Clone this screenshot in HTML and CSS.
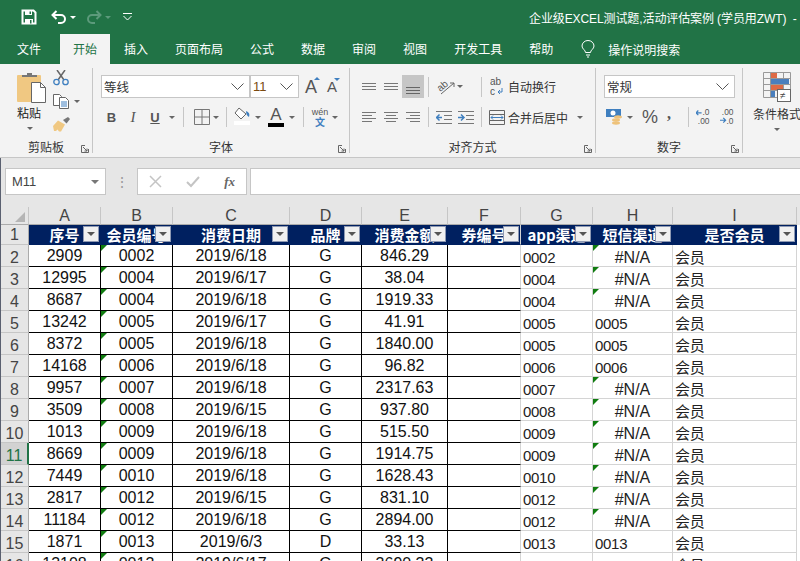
FILE: index.html
```html
<!DOCTYPE html>
<html lang="zh">
<head>
<meta charset="utf-8">
<title>企业级EXCEL测试题</title>
<link rel="stylesheet" href="styles.css">
</head>
<body>
<header class="titlebar">
  <div class="qat">
    <svg class="save" width="16" height="16" viewBox="0 0 16 16"><path d="M1.500 1.500h11l2 2v11h-13z" fill="none" stroke="#fff" stroke-width="2"/><path d="M4 1.500h7v4.500H4zM4 10h8v5H4z" fill="#fff"/><path d="M8.500 2.500h1.500v2.500H8.500zM9 11h1.500v3.500H9z" fill="#217346"/></svg>
    <svg class="undo" width="16" height="14" viewBox="0 0 16 14"><path d="M5.500 1 1.500 5l4 4M2 5h8a4 4 0 0 1 0 8H7" fill="none" stroke="#fff" stroke-width="2"/></svg>
    <span class="qcaret"></span>
    <svg class="redo" width="16" height="14" viewBox="0 0 16 14"><path d="M10.500 1l4 4-4 4M14 5H6a4 4 0 0 0 0 8h3" fill="none" stroke="#5c9a7b" stroke-width="2"/></svg>
    <span class="qcaret dim"></span>
    <svg class="custom" width="9" height="8" viewBox="0 0 9 8"><path d="M0 .5h9" stroke="#fff"/><path d="M.5 3l4 4 4-4" fill="none" stroke="#fff"/></svg>
  </div>
  <div class="doc">企业级EXCEL测试题,活动评估案例 (学员用ZWT)&nbsp; -</div>
</header>
<nav class="tabs">
  <span class="tab first">文件</span>
  <span class="tab active">开始</span>
  <span class="tab">插入</span>
  <span class="tab">页面布局</span>
  <span class="tab">公式</span>
  <span class="tab">数据</span>
  <span class="tab">审阅</span>
  <span class="tab">视图</span>
  <span class="tab">开发工具</span>
  <span class="tab">帮助</span>
  <svg class="bulb" width="14" height="18" viewBox="0 0 14 18"><path d="M4.500 12.500C4.500 10 1 9 1 6a6 5.500 0 0 1 12 0c0 3-3.500 4-3.500 6.500zM5 15h4M6 17h2" fill="none" stroke="#fff"/></svg>
  <span class="search">操作说明搜索</span>
</nav>

<section class="ribbon">
  <div class="group g-clip">
    <div class="paste">
      <svg width="29" height="31" viewBox="0 0 29 31"><rect x="0" y="3" width="24" height="27" rx="1" fill="#f0c882"/><path d="M5 5V3h5V1h5v2h5v2z" fill="#777"/><path d="M14.500 10.500h9l5 5v15h-14z" fill="#fff" stroke="#666"/><path d="M23.500 10.500v5h5" fill="none" stroke="#666"/></svg>
      <span class="paste-label">粘贴</span>
      <span class="caret"></span>
    </div>
    <div class="clip-tools">
      <svg width="16" height="16" viewBox="0 0 16 16"><path d="M4 0l7 10M12 0 5 10" stroke="#666" stroke-width="1.500"/><circle cx="3.500" cy="12" r="2.700" fill="none" stroke="#3f7fbf" stroke-width="1.300"/><circle cx="12.500" cy="12" r="2.700" fill="none" stroke="#3f7fbf" stroke-width="1.300"/></svg>
      <div class="copy-row">
        <svg width="16" height="15" viewBox="0 0 16 15"><path d="M.5.500h6l2 2v9h-8z" fill="#fff" stroke="#666"/><path d="M6.500 3.500h6l3 3v8h-9z" fill="#fff" stroke="#666"/><path d="M8 8h6M8 10h6M8 12h6" stroke="#3f7fbf"/></svg>
        <span class="caret"></span>
      </div>
      <svg width="17" height="15" viewBox="0 0 17 15"><path d="M10 3l3.500 3.500L17 2 15 0z" fill="#777"/><path d="M5 3.500l7 4-4 7H6l-1.500-2L3 14H1L0 9z" fill="#f0c882"/></svg>
    </div>
    <div class="label label-clip">剪贴板</div>
    <svg class="launch" width="8" height="8" viewBox="0 0 8 8"><path d="M7.500 4v3.500H.5v-7H4M2 2l4 4M6 3.500V6H3.500" fill="none" stroke="#666"/></svg>
  </div>

  <div class="group g-font">
    <div class="row row1">
      <div class="select w149"><span class="sel-text">等线</span><svg class="chev" width="13" height="7" viewBox="0 0 13 7"><path d="M.5.500l6 6 6-6" fill="none" stroke="#555"/></svg></div>
      <div class="select w49 size"><span class="size-num">11</span><svg class="chev" width="13" height="7" viewBox="0 0 13 7"><path d="M.5.500l6 6 6-6" fill="none" stroke="#555"/></svg></div>
      <span class="bigA first-a">A<i class="tri-up"></i></span>
      <span class="bigA small-a">A<i class="tri-down"></i></span>
    </div>
    <div class="row row2">
      <span class="tool w21 bold">B</span>
      <span class="tool w22 ital">I</span>
      <span class="tool w22 und">U</span>
      <span class="tool w12"><span class="caret"></span></span>
      <span class="vsep ml5"></span>
      <span class="tool w20 ml8"><svg width="16" height="16" viewBox="0 0 16 16"><path d="M.5.500h15v15H.5zM8 .5v15M.5 8h15" fill="none" stroke="#777"/></svg></span>
      <span class="tool w7"><span class="caret"></span></span>
      <span class="vsep ml7"></span>
      <span class="tool w16 ml7 stack"><svg width="16" height="13" viewBox="0 0 16 13"><path d="M5 1l7 6-5 5-6-6z" fill="#fff" stroke="#666"/><path d="M12 4c3 1 4 3 3 6-2-1-3-3-3-6z" fill="#3f7fbf"/></svg><i class="bar white"></i></span>
      <span class="tool w16"><span class="caret"></span></span>
      <span class="tool w16 ml2 stack colorA">A<i class="bar black"></i></span>
      <span class="tool w16"><span class="caret"></span></span>
      <span class="vsep ml3"></span>
      <span class="tool w16 ml8 phon"><span class="wen">wén</span><span class="wenzi">文</span></span>
      <span class="tool w14"><span class="caret"></span></span>
    </div>
    <div class="label label-font">字体</div>
    <svg class="launch" width="8" height="8" viewBox="0 0 8 8"><path d="M7.500 4v3.500H.5v-7H4M2 2l4 4M6 3.500V6H3.500" fill="none" stroke="#666"/></svg>
  </div>

  <div class="group g-align">
    <div class="row row1">
      <span class="tool w22"><svg class="lines" width="15" height="8" viewBox="0 0 15 8"><path d="M0 .5h14M0 3.500h14M0 6.500h14" stroke="#777"/></svg></span>
      <span class="tool w22"><svg class="lines" width="15" height="8" viewBox="0 0 15 8"><path d="M0 .5h14M0 3.500h14M0 6.500h14" stroke="#777"/></svg></span>
      <span class="tool w22 on"><svg class="lines low" width="15" height="8" viewBox="0 0 15 8"><path d="M0 .5h14M0 3.500h14M0 6.500h14" stroke="#666"/></svg></span>
      <span class="vsep ml4"></span>
      <span class="tool w20 ml7"><svg width="19" height="16" viewBox="0 0 19 16"><text class="svg-ab" x="1" y="11" transform="rotate(-40 5 9)">ab</text><path d="M4 15 17 4M13 4h4v4" fill="none" stroke="#666"/></svg></span>
      <span class="tool w7"><span class="caret"></span></span>
      <span class="vsep ml18"></span>
      <span class="tool w14 ml8"><svg width="14" height="19" viewBox="0 0 14 19"><text class="svg-ab" x="0" y="8">ab</text><text class="svg-ab" x="0" y="18">c</text><path d="M12 11v4H8M10 13l-2 2 2 2" fill="none" stroke="#3f7fbf"/></svg></span>
      <span class="text-tool ml4">自动换行</span>
    </div>
    <div class="row row2">
      <span class="tool w22"><svg width="15" height="11" viewBox="0 0 15 11"><path d="M0 .5h14M0 3.500h10M0 6.500h14M0 9.500h10" stroke="#777"/></svg></span>
      <span class="tool w22"><svg width="15" height="11" viewBox="0 0 15 11"><path d="M0 .5h14M2 3.500h10M0 6.500h14M2 9.500h10" stroke="#777"/></svg></span>
      <span class="tool w22"><svg width="15" height="11" viewBox="0 0 15 11"><path d="M0 .5h14M4 3.500h10M0 6.500h14M4 9.500h10" stroke="#777"/></svg></span>
      <span class="vsep ml4"></span>
      <span class="tool w16 ml7"><svg width="16" height="13" viewBox="0 0 16 13"><path d="M0 .5h16M8 4.500h8M8 8.500h8M0 12.500h16" stroke="#777"/><path d="M0 6.500h6M3.500 3.500l-3 3 3 3" fill="none" stroke="#3f7fbf" stroke-width="1.500"/></svg></span>
      <span class="tool w16 ml6"><svg width="16" height="13" viewBox="0 0 16 13"><path d="M0 .5h16M8 4.500h8M8 8.500h8M0 12.500h16" stroke="#777"/><path d="M0 6.500h6M3 3.500l3 3-3 3" fill="none" stroke="#3f7fbf" stroke-width="1.500"/></svg></span>
      <span class="vsep ml7"></span>
      <span class="tool w16 ml7"><svg width="16" height="15" viewBox="0 0 16 15"><path d="M.5.500h15v14H.5zM.5 4.500h15M.5 10.500h15" fill="none" stroke="#666"/><path d="M2 7.500h12M4 5.500l-2 2 2 2M12 5.500l2 2-2 2" fill="none" stroke="#3f7fbf"/></svg></span>
      <span class="text-tool ml3">合并后居中</span>
      <span class="tool w24"><span class="caret"></span></span>
    </div>
    <div class="label label-align">对齐方式</div>
    <svg class="launch" width="8" height="8" viewBox="0 0 8 8"><path d="M7.500 4v3.500H.5v-7H4M2 2l4 4M6 3.500V6H3.500" fill="none" stroke="#666"/></svg>
  </div>

  <div class="group g-num">
    <div class="row row1">
      <div class="select w131"><span class="sel-text">常规</span><svg class="chev" width="13" height="7" viewBox="0 0 13 7"><path d="M.5.500l6 6 6-6" fill="none" stroke="#555"/></svg></div>
    </div>
    <div class="row row2">
      <span class="tool w18 ml2"><svg width="18" height="16" viewBox="0 0 18 16"><rect x="0" y="0" width="15" height="8" fill="#3f7fbf"/><circle cx="7" cy="4" r="2.500" fill="#fff"/><ellipse cx="12" cy="8" rx="4" ry="1.700" fill="#eec27a"/><ellipse cx="10" cy="11" rx="4" ry="1.700" fill="#eec27a"/><ellipse cx="10" cy="14" rx="4" ry="1.700" fill="#eec27a"/></svg></span>
      <span class="tool w12"><span class="caret"></span></span>
      <span class="tool w14 ml7 pct">%</span>
      <span class="tool w14 ml5 comma">,</span>
      <span class="vsep ml12"></span>
      <span class="tool w14 ml7"><svg width="15" height="16" viewBox="0 0 15 16"><text class="svg-dec" x="7" y="6">.0</text><text class="svg-dec" x="2" y="15">.00</text><path d="M0 3.500h6M2.500 1 0 3.500 2.500 6" fill="none" stroke="#3f7fbf" stroke-width="1.300"/></svg></span>
      <span class="tool w14 ml10"><svg width="15" height="16" viewBox="0 0 15 16"><text class="svg-dec" x="2" y="6">.00</text><text class="svg-dec" x="7" y="15">.0</text><path d="M0 11.500h6M3.500 9 6 11.500 3.500 14" fill="none" stroke="#3f7fbf" stroke-width="1.300"/></svg></span>
    </div>
    <div class="label label-num">数字</div>
    <svg class="launch" width="8" height="8" viewBox="0 0 8 8"><path d="M7.500 4v3.500H.5v-7H4M2 2l4 4M6 3.500V6H3.500" fill="none" stroke="#666"/></svg>
  </div>

  <div class="group g-style">
    <svg class="cf" width="28" height="31" viewBox="0 0 28 31"><path d="M.5.500h27v25H.5zM.5 6.500h27M.5 12.500h27M.5 18.500h27M7.500.5v25M20.500.5v25" fill="none" stroke="#999"/><rect x="8" y="1" width="6" height="5" fill="#de6a45"/><rect x="8" y="7" width="18" height="5" fill="#4a7fbd"/><rect x="8" y="13" width="12" height="5" fill="#de6a45"/><rect x="8" y="19" width="4" height="6" fill="#4a7fbd"/><rect x="14.500" y="17.500" width="13" height="12" fill="#fff" stroke="#666"/><text class="svg-ne" x="17" y="27">≠</text></svg>
    <span class="style-label">条件格式</span>
    <span class="caret"></span>
  </div>
</section>

<section class="formula">
  <div class="namebox"><span>M11</span><span class="caret dark"></span></div>
  <div class="dots">⋮</div>
  <div class="fxbox">
    <svg width="13" height="13" viewBox="0 0 13 13"><path d="M1 1l11 11M12 1 1 12" stroke="#c4c4c4" stroke-width="1.500"/></svg>
    <svg width="14" height="12" viewBox="0 0 14 12"><path d="M1 6l4 4 8-9" fill="none" stroke="#c4c4c4" stroke-width="2"/></svg>
    <span class="fx">fx</span>
  </div>
  <div class="input"></div>
</section>

<table class="sheet">
  <colgroup>
    <col class="c-rh"><col class="c-a"><col class="c-b"><col class="c-c"><col class="c-d"><col class="c-e"><col class="c-f"><col class="c-g"><col class="c-h"><col class="c-i"><col class="c-j">
  </colgroup>
  <thead>
    <tr class="cols">
      <th class="corner"><i></i></th><th>A</th><th>B</th><th>C</th><th>D</th><th>E</th><th>F</th><th>G</th><th>H</th><th>I</th><th class="blank"></th>
    </tr>
  </thead>
  <tbody>
    <tr class="head">
      <th class="rh">1</th>
      <td><div class="clipcell">序号</div><i class="fb"></i></td>
      <td><div class="clipcell">会员编号</div><i class="fb"></i></td>
      <td><div class="clipcell">消费日期</div><i class="fb"></i></td>
      <td><div class="clipcell">品牌</div><i class="fb"></i></td>
      <td><div class="clipcell">消费金额</div><i class="fb"></i></td>
      <td><div class="clipcell">券编号</div><i class="fb"></i></td>
      <td><div class="clipcell">app渠道</div><i class="fb"></i></td>
      <td><div class="clipcell">短信渠道</div><i class="fb"></i></td>
      <td><div class="clipcell">是否会员</div><i class="fb"></i></td>
      <td class="blank"></td>
    </tr>
    <tr><th class="rh">2</th><td>2909</td><td class="t">0002</td><td>2019/6/18</td><td>G</td><td>846.29</td><td></td><td class="l">0002</td><td class="l c t">#N/A</td><td class="l">会员</td><td class="blank"></td></tr>
    <tr><th class="rh">3</th><td>12995</td><td class="t">0004</td><td>2019/6/17</td><td>G</td><td>38.04</td><td></td><td class="l">0004</td><td class="l c t">#N/A</td><td class="l">会员</td><td class="blank"></td></tr>
    <tr><th class="rh">4</th><td>8687</td><td class="t">0004</td><td>2019/6/18</td><td>G</td><td>1919.33</td><td></td><td class="l">0004</td><td class="l c t">#N/A</td><td class="l">会员</td><td class="blank"></td></tr>
    <tr><th class="rh">5</th><td>13242</td><td class="t">0005</td><td>2019/6/17</td><td>G</td><td>41.91</td><td></td><td class="l">0005</td><td class="l">0005</td><td class="l">会员</td><td class="blank"></td></tr>
    <tr><th class="rh">6</th><td>8372</td><td class="t">0005</td><td>2019/6/18</td><td>G</td><td>1840.00</td><td></td><td class="l">0005</td><td class="l">0005</td><td class="l">会员</td><td class="blank"></td></tr>
    <tr><th class="rh">7</th><td>14168</td><td class="t">0006</td><td>2019/6/18</td><td>G</td><td>96.82</td><td></td><td class="l">0006</td><td class="l">0006</td><td class="l">会员</td><td class="blank"></td></tr>
    <tr><th class="rh">8</th><td>9957</td><td class="t">0007</td><td>2019/6/18</td><td>G</td><td>2317.63</td><td></td><td class="l">0007</td><td class="l c t">#N/A</td><td class="l">会员</td><td class="blank"></td></tr>
    <tr><th class="rh">9</th><td>3509</td><td class="t">0008</td><td>2019/6/15</td><td>G</td><td>937.80</td><td></td><td class="l">0008</td><td class="l c t">#N/A</td><td class="l">会员</td><td class="blank"></td></tr>
    <tr><th class="rh">10</th><td>1013</td><td class="t">0009</td><td>2019/6/18</td><td>G</td><td>515.50</td><td></td><td class="l">0009</td><td class="l c t">#N/A</td><td class="l">会员</td><td class="blank"></td></tr>
    <tr><th class="rh sel">11</th><td>8669</td><td class="t">0009</td><td>2019/6/18</td><td>G</td><td>1914.75</td><td></td><td class="l">0009</td><td class="l c t">#N/A</td><td class="l">会员</td><td class="blank"></td></tr>
    <tr><th class="rh">12</th><td>7449</td><td class="t">0010</td><td>2019/6/18</td><td>G</td><td>1628.43</td><td></td><td class="l">0010</td><td class="l c t">#N/A</td><td class="l">会员</td><td class="blank"></td></tr>
    <tr><th class="rh">13</th><td>2817</td><td class="t">0012</td><td>2019/6/15</td><td>G</td><td>831.10</td><td></td><td class="l">0012</td><td class="l c t">#N/A</td><td class="l">会员</td><td class="blank"></td></tr>
    <tr><th class="rh">14</th><td>11184</td><td class="t">0012</td><td>2019/6/18</td><td>G</td><td>2894.00</td><td></td><td class="l">0012</td><td class="l c t">#N/A</td><td class="l">会员</td><td class="blank"></td></tr>
    <tr><th class="rh">15</th><td>1871</td><td class="t">0013</td><td>2019/6/3</td><td>D</td><td>33.13</td><td></td><td class="l">0013</td><td class="l">0013</td><td class="l">会员</td><td class="blank"></td></tr>
    <tr><th class="rh">16</th><td>13108</td><td class="t">0013</td><td>2019/6/17</td><td>G</td><td>3690.33</td><td></td><td class="l">0013</td><td class="l">0013</td><td class="l">会员</td><td class="blank"></td></tr>
  </tbody>
</table>
</body>
</html>
```

FILE: styles.css
```css
* { box-sizing: border-box; }
html, body { margin: 0; padding: 0; height: 561px; overflow: hidden; }
body { width: 800px; background: #e6e6e6; font-family: "Noto Sans CJK SC", "Liberation Sans", sans-serif; color: #333; font-size: 12px; }
i { font-style: normal; display: block; }

/* title */
.titlebar { height: 34px; background: #217346; display: flex; align-items: center; justify-content: space-between; color: #fff; }
.qat { display: flex; align-items: center; padding-left: 21px; }
.undo { margin-left: 14px; }
.qcaret { width: 0; height: 0; margin-left: 3px; border: 3px solid transparent; border-top: 3px solid #fff; border-bottom: 0; }
.qcaret.dim { border-top-color: #5c9a7b; }
.redo { margin-left: 10px; }
.custom { margin-left: 12px; }
.doc { font-family: "Liberation Sans", "Noto Sans CJK SC", sans-serif; font-size: 12px; letter-spacing: -0.1px; white-space: nowrap; width: 271px; overflow: hidden; }

.tabs { height: 30px; background: #217346; display: flex; align-items: center; gap: 1px; color: #fff; }
.tab { height: 30px; line-height: 30px; padding: 0 13px; font-size: 12px; }
.tab.first { margin-left: 4px; margin-right: 5px; }
.tab.active { background: #f3f3f3; color: #217346; }
.bulb { margin-left: 14px; }
.search { margin-left: 12px; }

/* ribbon */
.ribbon { height: 94px; background: #f3f3f3; border-bottom: 1px solid #c6c6c6; display: flex; align-items: flex-start; padding-top: 4px; }
.group { position: relative; height: 85px; border-right: 1px solid #c6c6c6; flex: none; }
.g-clip { width: 93px; display: flex; }
.g-font { width: 257px; padding-left: 8px; }
.g-align { width: 246px; padding-left: 8px; }
.g-num { width: 147px; padding-left: 8px; }
.g-style { flex: 1; border-right: 0; display: flex; flex-direction: column; align-items: flex-start; padding: 4px 0 0 10px; overflow: hidden; }
.cf { margin-left: 10px; }

.row { display: flex; align-items: center; }
.row1 { height: 23px; margin-top: 7px; }
.row2 { height: 20px; margin-top: 9px; }
.label { position: absolute; bottom: -2px; left: 0; right: 0; text-align: center; font-size: 12px; line-height: 16px; }
.launch { position: absolute; right: 3px; bottom: 0; }

.paste { width: 49px; margin-left: 17px; padding-top: 4px; display: flex; flex-direction: column; align-items: flex-start; }
.paste-label { line-height: 16px; margin-top: 2px; font-size: 12px; color: #222; }
.paste .caret { margin: 6px 0 0 10px; }
.clip-tools { display: flex; flex-direction: column; gap: 8px; margin-left: -13px; padding-top: 2px; }
.copy-row { display: flex; align-items: center; gap: 5px; }

.select { height: 23px; background: #fff; border: 1px solid #c6c6c6; display: flex; align-items: center; justify-content: space-between; padding: 0 5px 0 2px; color: #333; font-size: 12px; }
.sel-text { font-size: 12.5px; }
.w149 { width: 149px; }
.w49 { width: 49px; }
.w131 { width: 131px; }
.size-num { font-family: "Liberation Sans", sans-serif; font-size: 13px; color: #7a4a10; }
.bigA { position: relative; color: #555; font-family: "Liberation Sans", sans-serif; line-height: 1; }
.first-a { font-size: 18px; margin-left: 6px; }
.small-a { font-size: 15px; margin-left: 10px; }
.tri-up, .tri-down { position: absolute; left: 100%; width: 0; height: 0; border: 3px solid transparent; margin-left: -3px; }
.tri-up { top: -1px; border-top: 0; border-bottom: 3px solid #3f7fbf; }
.tri-down { top: -1px; border-bottom: 0; border-top: 3px solid #3f7fbf; }

.tool { display: flex; align-items: center; justify-content: center; flex: none; height: 20px; color: #555; }
.w7 { width: 7px; } .w12 { width: 12px; } .w14 { width: 14px; } .w16 { width: 16px; } .w18 { width: 18px; }
.w20 { width: 20px; } .w21 { width: 21px; } .w22 { width: 22px; } .w24 { width: 24px; }
.ml2 { margin-left: 2px; } .ml3 { margin-left: 3px; } .ml4 { margin-left: 4px; } .ml5 { margin-left: 5px; } .ml6 { margin-left: 6px; }
.ml7 { margin-left: 7px; } .ml8 { margin-left: 8px; } .ml10 { margin-left: 10px; } .ml12 { margin-left: 12px; } .ml18 { margin-left: 18px; }
.vsep { width: 1px; height: 20px; background: #c6c6c6; flex: none; }
.bold, .ital, .und { font-family: "Liberation Sans", sans-serif; font-weight: 700; font-size: 13px; color: #555; }
.ital { font-style: italic; font-weight: 400; font-family: "Liberation Serif", serif; font-size: 15px; }
.und { text-decoration: underline; }
.stack { flex-direction: column; justify-content: flex-start; }
.colorA { font-family: "Liberation Sans", sans-serif; font-size: 17px; line-height: 15px; color: #555; }
.bar { width: 16px; height: 4px; margin-top: 1px; flex: none; }
.bar.white { background: #fff; }
.bar.black { background: #000; }
.phon { flex-direction: column; }
.wen { font-family: "Liberation Sans", sans-serif; font-size: 9px; line-height: 10px; color: #555; }
.wenzi { font-size: 10px; line-height: 10px; color: #3f7fbf; font-weight: 700; }
.caret { display: block; width: 0; height: 0; border: 3px solid transparent; border-top: 3px solid #666; border-bottom: 0; flex: none; }
.caret.dark { border-width: 4px 4px 0; border-top-color: #777; }
.on { background: #c6c6c6; height: 23px; align-items: flex-end; padding-bottom: 3px; }
.text-tool { font-size: 12px; color: #333; white-space: nowrap; }
.svg-ab { font: 10px "Liberation Sans", sans-serif; fill: #555; }
.svg-dec { font: 9px "Liberation Sans", sans-serif; fill: #555; }
.svg-ne { font: 10px "Liberation Sans", sans-serif; fill: #444; }
.pct { font: 18px "Liberation Sans", sans-serif; color: #555; }
.comma { font: 700 16px "Liberation Serif", serif; color: #555; padding-bottom: 6px; }
.style-label { font-size: 12px; line-height: 16px; margin-top: 3px; white-space: nowrap; color: #333; }
.g-style .caret { margin: 6px 0 0 21px; }

/* formula bar */
.formula { height: 49px; padding: 10px 0 0 5px; display: flex; align-items: flex-start; border-left: 1px solid #5a6070; }
.namebox { width: 101px; height: 27px; background: #fff; border: 1px solid #c6c6c6; display: flex; align-items: center; justify-content: space-between; padding: 0 6px; font: 13px "Liberation Sans", sans-serif; color: #444; margin-left: -1px; }
.dots { width: 31px; height: 27px; line-height: 27px; text-align: center; color: #999; font-size: 14px; }
.fxbox { width: 110px; height: 27px; background: #fff; border: 1px solid #c6c6c6; display: flex; align-items: center; justify-content: space-between; padding: 0 11px 0 11px; }
.fx { font: italic 700 13px "Liberation Serif", serif; color: #666; }
.input { flex: 1; height: 27px; margin-left: 3px; background: #fff; border: 1px solid #c6c6c6; border-right: 0; }

/* sheet */
.sheet { table-layout: fixed; width: 800px; border-collapse: separate; border-spacing: 0; font-family: "Liberation Sans", "Noto Sans CJK SC", sans-serif; font-size: 16px; color: #111; background: #fff; border-left: 1px solid #5a6070; }
.c-rh { width: 28px; } .c-a { width: 72px; } .c-b { width: 72px; } .c-c { width: 117px; } .c-d { width: 72px; } .c-e { width: 86px; }
.c-f { width: 73px; } .c-g { width: 72px; } .c-h { width: 80px; } .c-i { width: 124px; } .c-j { width: 3px; }
.sheet th, .sheet td { padding: 0; font-weight: 400; overflow: hidden; white-space: nowrap; }
.cols th { height: 18px; background: #e6e6e6; border-right: 1px solid #c6c6c6; border-bottom: 1px solid #ababab; color: #444; line-height: 17px; font-size: 16px; position: relative; }
.cols .blank { border: 0; }
.corner i { position: absolute; right: 3px; bottom: 2px; width: 0; height: 0; border-left: 10px solid transparent; border-bottom: 10px solid #b5b5b5; }
.rh { background: #e6e6e6; border-right: 1px solid #ababab; border-bottom: 1px solid #c6c6c6; color: #444; text-align: center; vertical-align: bottom; line-height: 17px; }
.rh.sel { background: #d2d2d2; color: #217346; border-right: 2px solid #217346; }

tbody tr { height: 22px; }
tbody td { text-align: center; border-right: 1px solid #000; border-bottom: 1px solid #000; position: relative; line-height: 18px; vertical-align: middle; }
tbody td:nth-child(7) { border-right-color: #d4d4d4; }
tbody td.l { text-align: left; padding-left: 2px; border-right: 1px solid #d4d4d4; border-bottom: 1px solid #d4d4d4; vertical-align: bottom; color: #222; line-height: 16px; font-size: 15px; letter-spacing: -0.3px; }
tbody td.c { text-align: center; padding-left: 0; font-size: 16px; letter-spacing: 0; }
tbody td.blank { border: 0; background: #fff; }
td.t::before { content: ""; position: absolute; left: 0; top: 0; width: 0; height: 0; border-top: 6px solid #107c10; border-right: 6px solid transparent; }

tbody tr.head { height: 20px; }
.head td { background: #002060; color: #fff; font-weight: 700; font-size: 15px; border-right: 1px solid #002060; border-bottom: 1px solid #002060; position: relative; font-family: "Noto Sans CJK SC", "Liberation Sans", sans-serif; }
.head .rh { line-height: 19px; }
.head td.blank { background: #fff; border: 0; }
.clipcell { height: 19px; line-height: 19px; overflow: hidden; }
.fb { position: absolute; right: 1px; top: 1px; width: 16px; height: 16px; background: #f0f0f0; border: 1px solid #8e99b3; }
.fb::after { content: ""; position: absolute; left: 3px; top: 5px; width: 0; height: 0; border: 4px solid transparent; border-top: 4px solid #555; border-bottom: 0; }
```
